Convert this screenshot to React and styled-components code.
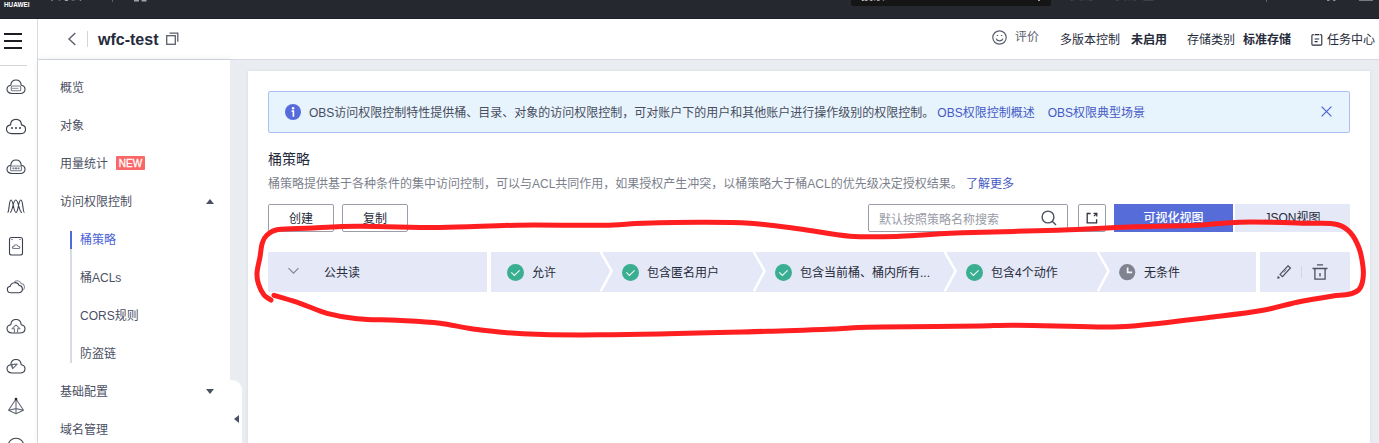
import React from "react";
import styled, { createGlobalStyle, css } from "styled-components";

const GlobalStyle = createGlobalStyle`
  * { box-sizing: border-box; }
  html, body { margin: 0; padding: 0; height: 100%; overflow: hidden; }
  body {
    font-family: "Liberation Sans", "Noto Sans CJK SC", sans-serif;
    font-size: 12px;
    color: #252b3a;
    background: #fff;
  }
  svg { display: block; flex: none; }
`;

const Page = styled.div`
  position: relative;
  width: 1379px;
  height: 443px;
  display: flex;
  flex-direction: column;
  overflow: hidden;
`;

/* ---------- console bar ---------- */
const TopBar = styled.header`
  flex: none;
  height: 19px;
  background: #25282f;
  border-bottom: 1px solid #1f2128;
  color: #d4d6dc;
  display: flex;
  align-items: flex-start;
  overflow: hidden;
`;
const Brand = styled.div`
  width: 46px;
  padding: 0 0 0 4px;
  font-size: 6.4px;
  line-height: 9px;
  font-weight: 700;
  color: #fff;
`;
const BarText = styled.span`
  width: ${(p) => p.$w}px;
  margin-top: -11px;
  line-height: 14px;
  white-space: nowrap;
  color: ${(p) => p.$color || "#a6a8af"};
`;
const BarRule = styled.span`
  width: 1px;
  height: 2px;
  margin-right: ${(p) => p.$after}px;
  background: #5d6068;
`;
const BarGap = styled.span`
  flex: 1;
`;
const BarSearch = styled.div`
  width: 200px;
  height: 6px;
  margin-right: 19px;
  padding-left: 10px;
  background: #151516;
  border-radius: 0 0 2px 2px;
  display: flex;
`;
const Avatar = styled.span`
  width: 14px;
  height: 1px;
  margin-right: 6px;
  background: #777a82;
`;

/* ---------- frame ---------- */
const Frame = styled.div`
  flex: 1;
  display: flex;
  min-height: 0;
`;
const Rail = styled.nav`
  width: 38px;
  flex: none;
  border-right: 1px solid #d8dade;
  overflow: hidden;
`;
const MenuButton = styled.div`
  width: 27px;
  height: 47px;
  padding: 14px 0 0 4px;
  border-bottom: 1px solid #d3d5d9;
  display: flex;
  flex-direction: column;
  gap: 5px;
`;
const MenuLine = styled.span`
  width: 18px;
  height: 2px;
  background: #1b1d22;
`;
const RailItem = styled.div`
  height: 40px;
  width: 32px;
  display: flex;
  align-items: center;
  justify-content: center;
`;
const Main = styled.div`
  flex: 1;
  display: flex;
  flex-direction: column;
  min-width: 0;
`;

/* ---------- bucket header ---------- */
const Header = styled.div`
  flex: none;
  height: 41px;
  border-bottom: 1px solid #d7dae0;
  display: flex;
  align-items: center;
  padding: 0 4px 0 29px;
  white-space: nowrap;
`;
const HeaderRule = styled.span`
  width: 1px;
  height: 16px;
  margin: 0 10px 0 10px;
  background: #d3d5da;
`;
const BucketName = styled.h1`
  margin: 0 8px 0 0;
  padding-top: 1px;
  font-size: 16px;
  line-height: 20px;
  font-weight: 700;
`;
const HeaderRight = styled.div`
  margin-left: auto;
  display: flex;
  align-items: center;
`;
const Rate = styled.div`
  display: flex;
  align-items: center;
  gap: 8px;
  margin-right: 21px;
  padding-bottom: 4px;
  color: #5b6070;
`;
const RateText = styled.span`
  padding-bottom: 3px;
`;
const Property = styled.div`
  display: flex;
  gap: ${(p) => p.$gap}px;
  margin-right: ${(p) => p.$after}px;
  padding-bottom: 2px;
`;
const Strong = styled.span`
  font-weight: 700;
`;
const TaskCenter = styled.div`
  display: flex;
  align-items: center;
  gap: 4px;
`;
const TaskLabel = styled.span`
  padding-bottom: 2px;
`;

/* ---------- side menu ---------- */
const Body = styled.div`
  flex: 1;
  display: flex;
  min-height: 0;
`;
const Sidebar = styled.aside`
  width: 192px;
  flex: none;
  padding-top: 8px;
  background: #fff;
  box-shadow: 1px 0 6px rgba(60, 75, 100, 0.14);
  overflow: hidden;
`;
const MenuItem = styled.div`
  height: 38px;
  padding: 0 16px 2px 22px;
  display: flex;
  align-items: center;
  color: #4b5063;
`;
const NewBadge = styled.span`
  width: 29px;
  height: 14px;
  margin: 2px 0 0 8px;
  border-radius: 1px;
  background: #fa6768;
  color: #fff;
  font-size: 10px;
  line-height: 15px;
  text-align: center;
  -webkit-text-stroke: 0.3px #fff;
`;
const Caret = styled.span`
  margin: 3px 0 0 auto;
  border: 4px solid transparent;
  border-top-width: 0;
  border-bottom: 5px solid #4b5063;
  transform: ${(p) => (p.$down ? "rotate(180deg)" : "none")};
`;
const SubMenu = styled.div`
  position: relative;
  padding-left: 42px;
  &::before {
    content: "";
    position: absolute;
    left: 32px;
    top: 11px;
    bottom: 9px;
    width: 2px;
    background: #d8dbe1;
  }
`;
const SubItem = styled.div`
  position: relative;
  height: 38px;
  line-height: 40px;
  color: #4b5063;
  ${(p) =>
    p.$active &&
    css`
      color: #4a62d6;
      &::before {
        content: "";
        position: absolute;
        left: -10px;
        top: 11px;
        width: 2px;
        height: 18px;
        background: #4f68da;
      }
    `}
`;

/* ---------- content ---------- */
const Content = styled.main`
  position: relative;
  flex: 1;
  padding: 11px 9px 0 18px;
  background: #e9ecf1;
  display: flex;
`;
const Fold = styled.div`
  position: absolute;
  left: 0;
  top: 320px;
  width: 12px;
  height: 80px;
  padding: 35px 0 0 4px;
  border-radius: 0 10px 10px 0;
  background: #fff;
`;
const FoldArrow = styled.span`
  display: block;
  width: 0;
  border: 4px solid transparent;
  border-left-width: 0;
  border-right: 5px solid #4b5063;
`;
const Card = styled.section`
  flex: 1;
  min-width: 0;
  padding: 20px 20px 0;
  background: #fff;
  box-shadow: 0 0 3px rgba(60, 75, 100, 0.1);
`;
const Notice = styled.div`
  height: 42px;
  padding: 0 17px 0 16px;
  border: 1px solid #adc0f6;
  border-radius: 2px;
  background: #e7f4fe;
  color: #484d5c;
  display: flex;
  align-items: center;
  white-space: nowrap;
`;
const NoticeText = styled.span`
  margin: 0 3px 0 8px;
  padding-bottom: 2px;
`;
const Link = styled.a`
  color: #4659c4;
  margin-right: ${(p) => p.$after || 0}px;
`;
const NoticeLink = styled(Link)`
  padding-bottom: 2px;
`;
const CloseSlot = styled.span`
  margin: 0 0 1px auto;
`;
const Title = styled.h2`
  margin: 16px 0 0;
  font-size: 14px;
  line-height: 20px;
  font-weight: 400;
`;
const Description = styled.p`
  margin: 5px 0 0;
  line-height: 20px;
  color: #7c7f8c;
  white-space: nowrap;
`;
const Toolbar = styled.div`
  display: flex;
  align-items: center;
  height: 28px;
  margin: 10px 0 20px;
`;
const Button = styled.button`
  width: ${(p) => p.$w}px;
  height: 28px;
  margin: 0 ${(p) => p.$after ?? 8}px 0 0;
  padding: 0 0 ${(p) => p.$lift || 0}px;
  border: 1px solid #9b9eaa;
  border-radius: 2px;
  background: #fff;
  color: #252b3a;
  font: inherit;
  display: flex;
  align-items: center;
  justify-content: center;
`;
const SearchBox = styled.div`
  width: 200px;
  height: 28px;
  margin: 0 10px 0 auto;
  padding: 0 10px 0 10px;
  border: 1px solid #9b9eaa;
  border-radius: 2px;
  color: #989ba6;
  display: flex;
  align-items: center;
  justify-content: space-between;
`;
const ViewSwitch = styled.div`
  display: flex;
  gap: 2px;
`;
const ViewTab = styled.div`
  width: ${(p) => p.$w}px;
  height: 28px;
  line-height: 28px;
  text-align: center;
  background: ${(p) => (p.$on ? "#566dd9" : "#e5e8f7")};
  color: ${(p) => (p.$on ? "#fff" : "#252b3a")};
  font-weight: ${(p) => (p.$on ? 500 : 400)};
`;

/* ---------- policy row ---------- */
const PolicyRow = styled.div`
  display: flex;
  gap: 4px;
  height: 40px;
`;
const Cell = styled.div`
  width: ${(p) => p.$w}px;
  background: #e5e8f7;
  display: flex;
  align-items: center;
`;
const NameCell = styled(Cell)`
  padding-left: 20px;
  gap: 25px;
`;
const ActionCell = styled(Cell)`
  padding: 0 0 1px 16px;
`;
const ActionRule = styled.span`
  width: 1px;
  height: 12px;
  margin: 0 10px 0 9px;
  background: #d3d6e2;
`;
const Step = styled.div`
  width: ${(p) => p.$w}px;
  height: 40px;
  display: flex;
  align-items: center;
  white-space: nowrap;
`;
const StepIcon = styled.span`
  margin: 1px 8px 0 ${(p) => p.$before}px;
`;
const CellText = styled.span`
  padding-bottom: 2px;
`;

const Marker = styled.svg`
  position: absolute;
  inset: 0;
  pointer-events: none;
`;

/* ---------- icons ---------- */
const CLOUD =
  "M6 19.5 C2.8 19.5 1 17.6 1 15.3 C1 13 2.6 11.5 4.8 11.2 C5 7.8 7.2 6 10 6 C12.8 6 15 7.8 15.2 11.2 C17.4 11.5 19 13 19 15.3 C19 17.6 17.2 19.5 14 19.5 Z";

const RailSvg = ({ children }) => (
  <svg width="20" height="24" viewBox="0 0 20 24" fill="none" stroke="#3b404e" strokeWidth="1.1" strokeLinejoin="round">
    {children}
  </svg>
);
const railIcons = [
  <>
    <path d={CLOUD} />
    <rect x="5.3" y="12" width="9.4" height="4.8" rx="1.4" stroke="#777b87" />
    <path d="M6 14.4h6.5" stroke="#9a9da6" />
  </>,
  <>
    <path d={CLOUD} transform="translate(-.6 -1) scale(1.06)" />
    <path d="M5 14h2M9 14h2M13 14h2" strokeWidth="1.7" />
  </>,
  <>
    <path d={CLOUD} />
    <rect x="4.6" y="12" width="10.8" height="4.8" rx="1" stroke="#777b87" />
    <path d="M6.5 14.4h2M9 14.4h2M11.5 14.4h2" stroke="#777b87" strokeWidth="1.6" />
  </>,
  <path d="M1.5 18.5 C3.5 18.5 2.7 6 5 6 C7.5 6 7.5 18.5 10 18.5 C12.5 18.5 12.2 6 14.8 6 C17.3 6 16.5 18.5 18.5 18.5 M4 18.5 C6.8 18.5 6.8 6 9.8 6 C12.8 6 12.8 18.5 16 18.5" />,
  <>
    <rect x="3.5" y="3.5" width="13" height="17.5" rx="2" />
    <path d="M5.5 5.5h1M13.5 5.5h1" />
    <path d="M7.8 14.5c-1.8 0-2-2 .1-2.1.3-2.2 3.6-2.2 4.1-.2 2.4 0 2.2 2.3.5 2.3z" stroke="#777b87" />
  </>,
  <>
    <path d="M8.5 8c1.2-1.7 5.4-2 6.5 1.4 3.7.4 4.4 4.4 2.4 6.6" stroke="#8a8e98" />
    <path d="M5.2 18.8C.3 18.6.2 12.8 4.2 12.4 5.2 7.8 11.6 7.4 13 11.4c4.4.4 4.6 7 .1 7.4z" />
  </>,
  <>
    <path d={CLOUD} transform="translate(0 -.5)" />
    <path d="M10 10.8l-4 4h2.4v4M10 10.8l4 4h-2.4v4" stroke="#777b87" />
  </>,
  <>
    <path d={CLOUD} transform="translate(0 -.5)" />
    <path d="M5 10.5l6.2-.4-4.5 4.6zM6.7 14.7L6 10.5" stroke="#666a77" />
  </>,
  <>
    <path d="M10 5L2.5 16.3 10 19.8l7.5-3.5zM10 5v14.8M2.5 16.3l7.5-1.7 7.5 1.7" stroke="#666a77" />
    <circle cx="10" cy="5" r="1.3" fill="#222630" stroke="none" />
  </>,
  <>
    <circle cx="10" cy="12" r="7.8" />
    <path d="M6.5 12.4c1-3 6-3 7 0" stroke="#777b87" />
  </>,
];

const CheckIcon = () => (
  <svg width="17" height="17" viewBox="0 0 17 17">
    <circle cx="8.5" cy="8.5" r="8.5" fill="#3aae90" />
    <path d="M4.3 8.4l3.1 3 5.2-5" fill="none" stroke="#e9f8f3" strokeWidth="1.2" />
  </svg>
);
const ClockIcon = () => (
  <svg width="17" height="17" viewBox="0 0 17 17">
    <circle cx="8.2" cy="8.2" r="8.1" fill="#80838f" />
    <path d="M8.6 3.6v4.8h4.6" fill="none" stroke="#f1f2f8" strokeWidth="1.7" />
  </svg>
);
const StepArrow = () => (
  <svg width="14" height="40" viewBox="0 0 14 40">
    <path d="M0.4 -0.5L11.6 19L0.7 39.3" fill="none" stroke="#fff" strokeWidth="2.5" />
  </svg>
);

const strokePoints = [
  [271, 300], [264, 295], [258.5, 284], [257, 273], [260, 257], [262.3, 243], [267, 235], [277, 229.8],
  [307, 228.3], [357, 226.3], [440, 227.5], [517, 225.2], [605, 225.2], [643, 223.3], [700, 222.3],
  [750, 223.3], [800, 229], [850, 236.2], [900, 236.3], [950, 233.3], [1063, 230], [1130, 227],
  [1197, 225.3], [1240, 222.2], [1313, 223.3], [1337, 224.5], [1350, 232.3], [1359, 248],
  [1363, 266.7], [1362.8, 280], [1359, 289.5], [1350, 294], [1333, 296], [1297, 302.3], [1263, 310.3],
  [1213, 317], [1130, 326.3], [1097, 327], [1013, 325.2], [980, 326], [867, 327.3], [833, 329],
  [767, 331.3], [600, 334.8], [523, 333.7], [473, 329], [440, 323.2], [397, 320.3], [357, 318.7],
  [327, 313.3], [300, 303.3], [274, 295.3],
];

function smoothPath(pts) {
  let d = `M${pts[0][0]} ${pts[0][1]}`;
  for (let i = 0; i < pts.length - 1; i++) {
    const a = pts[i - 1] || pts[i];
    const b = pts[i];
    const c = pts[i + 1];
    const e = pts[i + 2] || c;
    const span = Math.hypot(c[0] - b[0], c[1] - b[1]);
    const tangent = (p, q) => {
      const len = Math.hypot(q[0] - p[0], q[1] - p[1]) || 1;
      return [((q[0] - p[0]) / len) * (span / 3), ((q[1] - p[1]) / len) * (span / 3)];
    };
    const t1 = tangent(a, c);
    const t2 = tangent(b, e);
    d += `C${b[0] + t1[0]} ${b[1] + t1[1]} ${c[0] - t2[0]} ${c[1] - t2[1]} ${c[0]} ${c[1]}`;
  }
  return d;
}

const steps = [
  { label: "允许", width: 109, before: 16 },
  { label: "包含匿名用户", width: 153, before: 8 },
  { label: "包含当前桶、桶内所有...", width: 191, before: 8 },
  { label: "包含4个动作", width: 153, before: 8 },
  { label: "无条件", width: 159, before: 8, pending: true },
];

export default function App() {
  return (
    <>
      <GlobalStyle />
      <Page>
        <TopBar>
          <Brand>HUAWEI</Brand>
          <BarText $w={41}>华为云</BarText>
          <BarText $w={25} $color="#60636b">▾</BarText>
          <BarRule $after={21} />
          <svg width="14" height="2" viewBox="0 0 14 2">
            <path d="M0 .7h5M7.5 .7h5" stroke="#a0a2a9" strokeWidth="1.4" />
          </svg>
          <BarGap />
          <BarSearch>
            <BarText $w={177} $color="#d2d3d7">搜索</BarText>
            <svg width="2" height="2" viewBox="0 0 2 2">
              <path d="M0 0h2v1H0z" fill="#a6a8af" />
            </svg>
          </BarSearch>
          <BarText $w={45} $color="#43464e">费用</BarText>
          <BarText $w={151} $color="#43464e">资源 企业</BarText>
          <BarRule $after={60} />
          <svg width="9" height="2" viewBox="0 0 9 2">
            <path d="M0 .5h2.5M6 .5h2.5" stroke="#8a8c94" />
          </svg>
          <BarText $w={23} />
          <Avatar />
        </TopBar>
        <Frame>
          <Rail>
            <MenuButton>
              <MenuLine />
              <MenuLine />
              <MenuLine />
            </MenuButton>
            {railIcons.map((icon, i) => (
              <RailItem key={i}>
                <RailSvg>{icon}</RailSvg>
              </RailItem>
            ))}
          </Rail>
          <Main>
            <Header>
              <svg width="10" height="14" viewBox="0 0 10 14">
                <path d="M8.3 1L2 7l6.3 6" fill="none" stroke="#5b5f6b" strokeWidth="1.4" />
              </svg>
              <HeaderRule />
              <BucketName>wfc-test</BucketName>
              <svg width="13" height="14" viewBox="0 0 13 14" fill="none" stroke="#5b5f6b" strokeWidth="1.3">
                <rect x="0.7" y="3.7" width="8.6" height="8.6" />
                <path d="M3.5 1.2h8.3v8.6" />
              </svg>
              <HeaderRight>
                <Rate>
                  <svg width="15" height="15" viewBox="0 0 15 15" fill="none" stroke="#5b6070" strokeWidth="1.2">
                    <circle cx="7.5" cy="7.5" r="6.7" />
                    <path d="M4.2 8.8c.9 2.8 5.7 2.8 6.6 0" />
                    <path d="M4.7 5.5h1.4M8.9 5.5h1.4" />
                  </svg>
                  <RateText>评价</RateText>
                </Rate>
                <Property $gap={11} $after={20}>
                  <span>多版本控制</span>
                  <Strong>未启用</Strong>
                </Property>
                <Property $gap={8} $after={20}>
                  <span>存储类别</span>
                  <Strong>标准存储</Strong>
                </Property>
                <TaskCenter>
                  <svg width="12" height="13" viewBox="0 0 12 13" fill="none" stroke="#252b3a" strokeWidth="1.1">
                    <path d="M3.2 1.8H1.8c-.6 0-.9.3-.9.9v8.5c0 .6.3.9.9.9h8.1c.6 0 .9-.3.9-.9V2.7c0-.6-.3-.9-.9-.9H8.5" />
                    <path d="M3.8 1.6h4.2M3.6 6h4.6M3.6 8.6h3" />
                  </svg>
                  <TaskLabel>任务中心</TaskLabel>
                </TaskCenter>
              </HeaderRight>
            </Header>
            <Body>
              <Sidebar>
                <MenuItem>概览</MenuItem>
                <MenuItem>对象</MenuItem>
                <MenuItem>
                  用量统计
                  <NewBadge>NEW</NewBadge>
                </MenuItem>
                <MenuItem>
                  访问权限控制
                  <Caret />
                </MenuItem>
                <SubMenu>
                  <SubItem $active>桶策略</SubItem>
                  <SubItem>桶ACLs</SubItem>
                  <SubItem>CORS规则</SubItem>
                  <SubItem>防盗链</SubItem>
                </SubMenu>
                <MenuItem>
                  基础配置
                  <Caret $down />
                </MenuItem>
                <MenuItem>域名管理</MenuItem>
              </Sidebar>
              <Content>
                <Fold>
                  <FoldArrow />
                </Fold>
                <Card>
                  <Notice>
                    <svg width="16" height="16" viewBox="0 0 16 16">
                      <circle cx="8" cy="8" r="8" fill="#566cdb" />
                      <circle cx="8.1" cy="4.2" r="1.2" fill="#fff" />
                      <path d="M6.6 7.1h1.8v5.7" fill="none" stroke="#fff" strokeWidth="1.6" />
                    </svg>
                    <NoticeText>
                      OBS访问权限控制特性提供桶、目录、对象的访问权限控制，可对账户下的用户和其他账户进行操作级别的权限控制。
                    </NoticeText>
                    <NoticeLink $after={13}>OBS权限控制概述</NoticeLink>
                    <NoticeLink>OBS权限典型场景</NoticeLink>
                    <CloseSlot>
                      <svg width="11" height="11" viewBox="0 0 11 11">
                        <path d="M.6.6l9.8 9.8M10.4.6L.6 10.4" stroke="#5268d6" strokeWidth="1.3" />
                      </svg>
                    </CloseSlot>
                  </Notice>
                  <Title>桶策略</Title>
                  <Description>
                    桶策略提供基于各种条件的集中访问控制，可以与ACL共同作用，如果授权产生冲突，以桶策略大于桶ACL的优先级决定授权结果。{" "}
                    <Link>了解更多</Link>
                  </Description>
                  <Toolbar>
                    <Button $w={66} $lift={2}>创建</Button>
                    <Button $w={66} $lift={2}>复制</Button>
                    <SearchBox>
                      默认按照策略名称搜索
                      <svg width="16" height="16" viewBox="0 0 16 16" fill="none" stroke="#4b5060" strokeWidth="1.4">
                        <circle cx="7" cy="7" r="5.9" />
                        <path d="M11.2 11.2l3.8 3.8" />
                      </svg>
                    </SearchBox>
                    <Button $w={28}>
                      <svg width="12" height="12" viewBox="0 0 12 12" fill="none" stroke="#303542" strokeWidth="1.3">
                        <path d="M4.6 1.5H1.2v9.4h9.4V7.2" />
                        <path d="M7.5 1.3h3.3v3.3M10.8 1.3L8 4.1" />
                      </svg>
                    </Button>
                    <ViewSwitch>
                      <ViewTab $w={119} $on>可视化视图</ViewTab>
                      <ViewTab $w={115}>JSON视图</ViewTab>
                    </ViewSwitch>
                  </Toolbar>
                  <PolicyRow>
                    <NameCell $w={219}>
                      <svg width="11" height="10" viewBox="0 0 11 10">
                        <path d="M.5 1.2l5 5 5-5" fill="none" stroke="#80838f" strokeWidth="1.1" />
                      </svg>
                      <CellText>公共读</CellText>
                    </NameCell>
                    <Cell $w={765}>
                      {steps.map((s, i) => (
                        <Step key={s.label} $w={s.width}>
                          {i > 0 && <StepArrow />}
                          <StepIcon $before={s.before}>{s.pending ? <ClockIcon /> : <CheckIcon />}</StepIcon>
                          <CellText>{s.label}</CellText>
                        </Step>
                      ))}
                    </Cell>
                    <ActionCell $w={90}>
                      <svg width="16" height="16" viewBox="0 0 16 16" fill="none" stroke="#4b5060" strokeWidth="1.2">
                        <path d="M12 1.8l2.4 2.2-7.9 8.6-2.5-2.2z" />
                        <path d="M10.4 5.6l-2.6 2.8" strokeWidth=".7" />
                        <path d="M2 12l-.6 2.4 2.5-.5z" fill="#4b5060" strokeWidth=".4" />
                      </svg>
                      <ActionRule />
                      <svg width="16" height="18" viewBox="0 0 16 18" fill="none" stroke="#4b5060" strokeWidth="1.3">
                        <path d="M5 1.9h6M.5 5.5h15M2.9 5.5v10.6h10.2V5.5M8 10v3.6" />
                      </svg>
                    </ActionCell>
                  </PolicyRow>
                </Card>
              </Content>
            </Body>
          </Main>
        </Frame>
        <Marker width="1379" height="443" viewBox="0 0 1379 443">
          <path
            d={smoothPath(strokePoints)}
            fill="none"
            stroke="#ff1e20"
            strokeWidth="5"
            strokeLinecap="round"
            strokeLinejoin="round"
          />
        </Marker>
      </Page>
    </>
  );
}
